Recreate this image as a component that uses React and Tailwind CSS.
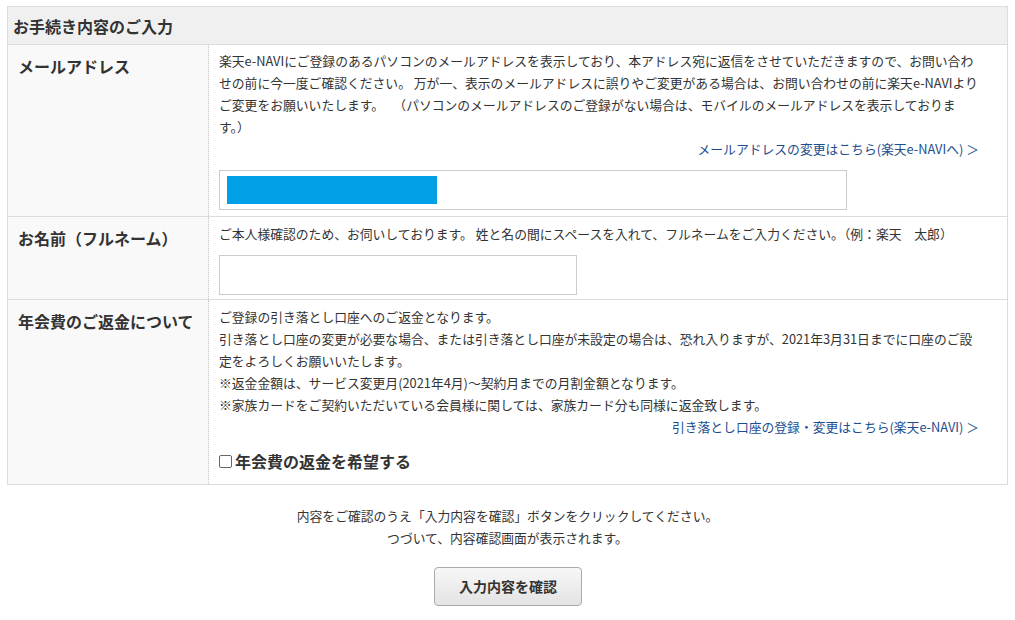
export default function App() {
  const font = { fontFamily: '"Noto Sans CJK JP", "Noto Sans", sans-serif' };
  return (
    <div className="bg-white text-[#333] min-h-[620px]" style={font}>
      <div className="px-[7px] pt-[6px]">
        <div className="border border-[#dcdcdc]">
          <div className="bg-[#f0f0f0] h-[38px] flex items-center px-[5px] text-[16px] font-bold text-[#333] border-b border-[#dcdcdc]">
            お手続き内容のご入力
          </div>
          {/* Row 1 */}
          <div className="flex border-b border-[#dcdcdc]">
            <div className="w-[201px] shrink-0 bg-[#f9f9f9] border-r border-dotted border-[#c8c8c8] px-[10px] pt-[8px] text-[16px] font-bold leading-[26px]">
              メールアドレス
            </div>
            <div className="flex-1 pl-[10px] pr-[28px] pt-[5px] pb-[6px] text-[12.8px] leading-[22px]">
              <p>
                楽天e-NAVIにご登録のあるパソコンのメールアドレスを表示しており、本アドレス宛に返信をさせていただきますので、お問い合わせの前に今一度ご確認ください。 万が一、表示のメールアドレスに誤りやご変更がある場合は、お問い合わせの前に楽天e-NAVIよりご変更をお願いいたします。 　（パソコンのメールアドレスのご登録がない場合は、モバイルのメールアドレスを表示しております。）
              </p>
              <div className="text-right text-[#1d4e8f]">メールアドレスの変更はこちら(楽天e-NAVIへ) ＞</div>
              <div className="mt-[10px] w-[628px] h-[40px] border border-[#cccccc] flex items-center px-[7px]">
                <div className="w-[210px] h-[28px] bg-[#00a0e6]"></div>
              </div>
            </div>
          </div>
          {/* Row 2 */}
          <div className="flex border-b border-[#dcdcdc]">
            <div className="w-[201px] shrink-0 bg-[#f9f9f9] border-r border-dotted border-[#c8c8c8] px-[10px] pt-[8px] text-[16px] font-bold leading-[26px]">
              お名前（フルネーム）
            </div>
            <div className="flex-1 pl-[10px] pr-[28px] pt-[6px] pb-[4px] text-[12.8px] leading-[22px]">
              <p>ご本人様確認のため、お伺いしております。 姓と名の間にスペースを入れて、フルネームをご入力ください。（例：楽天　太郎）</p>
              <div className="mt-[10px] w-[358px] h-[40px] border border-[#cccccc]"></div>
            </div>
          </div>
          {/* Row 3 */}
          <div className="flex">
            <div className="w-[201px] shrink-0 bg-[#f9f9f9] border-r border-dotted border-[#c8c8c8] px-[10px] pt-[8px] text-[16px] font-bold leading-[26px]">
              年会費のご返金について
            </div>
            <div className="flex-1 pl-[10px] pr-[28px] pt-[6px] pb-[12px] text-[12.8px] leading-[22px]">
              <p>ご登録の引き落とし口座へのご返金となります。</p>
              <p>引き落とし口座の変更が必要な場合、または引き落とし口座が未設定の場合は、恐れ入りますが、2021年3月31日までに口座のご設定をよろしくお願いいたします。</p>
              <p>※返金金額は、サービス変更月(2021年4月)～契約月までの月割金額となります。</p>
              <p>※家族カードをご契約いただいている会員様に関しては、家族カード分も同様に返金致します。</p>
              <div className="text-right text-[#1d4e8f]">引き落とし口座の登録・変更はこちら(楽天e-NAVI) ＞</div>
              <label className="mt-[12px] flex items-center text-[16px] font-bold leading-[22px]">
                <span className="inline-block w-[13px] h-[13px] border border-[#666] rounded-[2px] mr-[3px] bg-white"></span>
                年会費の返金を希望する
              </label>
            </div>
          </div>
        </div>
      </div>
      <div className="text-center text-[12.8px] leading-[22px] mt-[20px]">
        <p>内容をご確認のうえ「入力内容を確認」ボタンをクリックしてください。</p>
        <p>つづいて、内容確認画面が表示されます。</p>
      </div>
      <div className="flex justify-center mt-[18px] pl-[1px]">
        <button className="w-[148px] h-[39px] rounded-[4px] border border-[#aaaaaa] bg-gradient-to-b from-[#f7f7f7] to-[#e3e3e3] text-[14px] font-bold text-[#333]">
          入力内容を確認
        </button>
      </div>
    </div>
  );
}
